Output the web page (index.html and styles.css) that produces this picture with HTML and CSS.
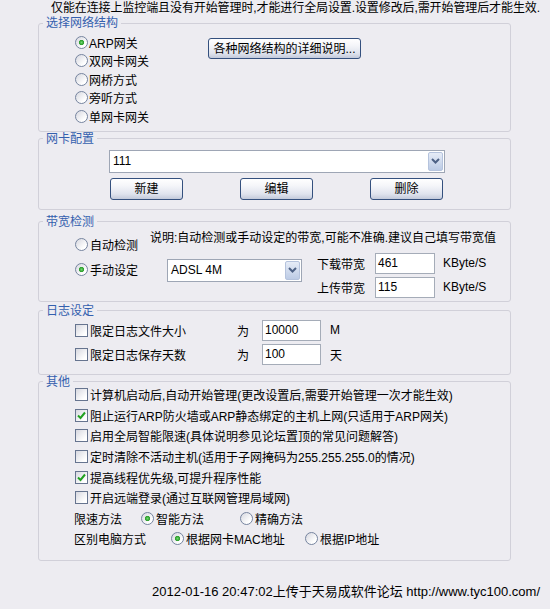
FILE: index.html
```html
<!DOCTYPE html>
<html lang="zh-CN">
<head>
<meta charset="utf-8">
<title>全局设置</title>
<link rel="stylesheet" href="styles.css">
</head>
<body>
<div class="notice">仅能在连接上监控端且没有开始管理时,才能进行全局设置.设置修改后,需开始管理后才能生效.</div>

<fieldset class="grp g1">
  <legend>选择网络结构</legend>
  <div class="g1-body">
    <div class="net-list">
      <div class="opt"><span class="radio on"></span><span>ARP网关</span></div>
      <div class="opt"><span class="radio"></span><span>双网卡网关</span></div>
      <div class="opt"><span class="radio"></span><span>网桥方式</span></div>
      <div class="opt"><span class="radio"></span><span>旁听方式</span></div>
      <div class="opt"><span class="radio"></span><span>单网卡网关</span></div>
    </div>
    <div class="btn btn-wide">各种网络结构的详细说明...</div>
  </div>
</fieldset>

<fieldset class="grp g2">
  <legend>网卡配置</legend>
  <div class="g2-body">
    <div class="combo combo-nic"><span class="combo-text">111</span><span class="combo-arrow"><svg width="9" height="6" viewBox="0 0 9 6"><polyline points="1,1 4.5,4.5 8,1" fill="none" stroke="#4d6185" stroke-width="2"/></svg></span></div>
    <div class="nic-btns">
      <div class="btn btn-small">新建</div>
      <div class="btn btn-small">编辑</div>
      <div class="btn btn-small">删除</div>
    </div>
  </div>
</fieldset>

<fieldset class="grp g3">
  <legend>带宽检测</legend>
  <div class="g3-body">
    <div class="bw-modes">
      <div class="opt opt-bw"><span class="radio"></span><span>自动检测</span></div>
      <div class="opt opt-bw"><span class="radio on"></span><span>手动设定</span></div>
    </div>
    <div class="bw-main">
      <div class="bw-note">说明:自动检测或手动设定的带宽,可能不准确.建议自己填写带宽值</div>
      <div class="bw-row">
        <div class="combo combo-bw"><span class="combo-text">ADSL 4M</span><span class="combo-arrow"><svg width="9" height="6" viewBox="0 0 9 6"><polyline points="1,1 4.5,4.5 8,1" fill="none" stroke="#4d6185" stroke-width="2"/></svg></span></div>
        <div class="bw-grid">
          <span class="bw-label">下载带宽</span><span class="field">461</span><span class="unit">KByte/S</span>
          <span class="bw-label">上传带宽</span><span class="field">115</span><span class="unit">KByte/S</span>
        </div>
      </div>
    </div>
  </div>
</fieldset>

<fieldset class="grp g4">
  <legend>日志设定</legend>
  <div class="g4-body">
    <div class="opt"><span class="chk"></span><span>限定日志文件大小</span></div>
    <span class="wei">为</span><span class="field">10000</span><span class="unit">M</span>
    <div class="opt"><span class="chk"></span><span>限定日志保存天数</span></div>
    <span class="wei">为</span><span class="field">100</span><span class="unit">天</span>
  </div>
</fieldset>

<fieldset class="grp g5">
  <legend>其他</legend>
  <div class="g5-body">
    <div class="row opt"><span class="chk"></span><span>计算机启动后,自动开始管理(更改设置后,需要开始管理一次才能生效)</span></div>
    <div class="row opt"><span class="chk on"><svg width="11" height="11" viewBox="0 0 11 11"><polyline points="2,5.5 4.5,8 9,2.5" fill="none" stroke="#21a121" stroke-width="2"/></svg></span><span>阻止运行ARP防火墙或ARP静态绑定的主机上网(只适用于ARP网关)</span></div>
    <div class="row opt"><span class="chk"></span><span>启用全局智能限速(具体说明参见论坛置顶的常见问题解答)</span></div>
    <div class="row opt"><span class="chk"></span><span>定时清除不活动主机(适用于子网掩码为255.255.255.0的情况)</span></div>
    <div class="row opt"><span class="chk on"><svg width="11" height="11" viewBox="0 0 11 11"><polyline points="2,5.5 4.5,8 9,2.5" fill="none" stroke="#21a121" stroke-width="2"/></svg></span><span>提高线程优先级,可提升程序性能</span></div>
    <div class="row opt"><span class="chk"></span><span>开启远端登录(通过互联网管理局域网)</span></div>
    <div class="row">
      <span class="row-label rl-speed">限速方法</span>
      <div class="opt opt-speed"><span class="radio on"></span><span>智能方法</span></div>
      <div class="opt"><span class="radio"></span><span>精确方法</span></div>
    </div>
    <div class="row">
      <span class="row-label rl-pc">区别电脑方式</span>
      <div class="opt opt-pc"><span class="radio on"></span><span>根据网卡MAC地址</span></div>
      <div class="opt"><span class="radio"></span><span>根据IP地址</span></div>
    </div>
  </div>
</fieldset>

<div class="footer">2012-01-16 20:47:02上传于天易成软件论坛 http://www.tyc100.com/</div>
</body>
</html>
```

FILE: styles.css
```css
* { box-sizing: border-box; }

html, body {
  margin: 0;
  padding: 0;
  background: #edecf1;
}

body {
  font-family: "Liberation Sans", "Noto Sans CJK SC", sans-serif;
  font-size: 12px;
  color: #000;
  width: 550px;
  height: 609px;
  overflow: hidden;
}

.notice {
  height: 16px;
  line-height: 16px;
  padding-left: 51px;
  white-space: nowrap;
  letter-spacing: -0.1px;
}

.grp {
  margin: 0 0 0 38px;
  width: 473px;
  padding: 0;
  border: 1px solid #d1d0d9;
  border-radius: 3px;
  min-width: 0;
}

.grp legend {
  margin-left: 4px;
  padding: 0 3px;
  line-height: 14px;
  height: 14px;
  color: #3460ae;
}

.opt {
  display: flex;
  align-items: center;
  white-space: nowrap;
}

.radio {
  flex: none;
  width: 13px;
  height: 13px;
  border-radius: 50%;
  border: 1px solid #76849f;
  background: linear-gradient(135deg, #d6d7df, #ffffff 75%);
  margin-right: 2px;
}

.radio.on {
  background:
    radial-gradient(circle at 50% 50%, #6fd86f 0, #2c9e2c 2.2px, rgba(44,158,44,0) 3px),
    linear-gradient(135deg, #d6d7df, #ffffff 75%);
}

.chk {
  flex: none;
  width: 13px;
  height: 13px;
  border: 1px solid #66748f;
  background: linear-gradient(135deg, #d7d8e0, #ffffff 80%);
  margin-right: 2px;
  display: flex;
  align-items: center;
  justify-content: center;
}

.chk svg { display: block; }

.btn {
  display: flex;
  align-items: center;
  justify-content: center;
  border: 1px solid #34507e;
  border-radius: 3px;
  background: linear-gradient(#ffffff 0%, #f4f5f9 35%, #dfe3ed 75%, #c3cadb 100%);
  white-space: nowrap;
  line-height: 14px;
}

.field {
  display: flex;
  align-items: center;
  height: 21px;
  background: #fff;
  border: 1px solid #a5acb8;
  padding-left: 2px;
}

.combo {
  display: flex;
  align-items: stretch;
  background: #fff;
  border: 1px solid #9ea6b5;
  padding: 1px;
}

.combo-text {
  flex: 1;
  display: flex;
  align-items: center;
  padding-left: 2px;
}

.combo-arrow {
  flex: none;
  width: 15px;
  display: flex;
  align-items: center;
  justify-content: center;
  border: 1px solid #b5c3dd;
  border-radius: 2px;
  background: linear-gradient(#e6ecf7, #bccbe5);
}

.combo-arrow svg { display: block; }

/* group 1 */
.g1-body {
  display: flex;
  padding: 3px 0 5px 36px;
}

.net-list {
  width: 133px;
}

.net-list .opt {
  height: 18.5px;
}

.net-list .radio { margin-right: 1px; }

.btn-wide {
  width: 153px;
  height: 21px;
  margin-top: 5px;
}

/* group 2 */
.g2-body {
  padding: 4px 0 9px 70px;
}

.combo-nic {
  width: 336px;
  height: 23px;
}

.nic-btns {
  display: flex;
  justify-content: space-between;
  width: 333px;
  margin-top: 5px;
  margin-left: 1px;
}

.btn-small {
  width: 73px;
  height: 22px;
}

/* group 3 */
.g3 { margin-top: 5px; }

.g3-body {
  display: flex;
  padding: 0 0 3px 36px;
}

.bw-modes {
  width: 75px;
  padding-top: 6px;
  display: flex;
  flex-direction: column;
  gap: 5px;
}

.opt-bw {
  height: 20px;
}

.bw-note {
  margin-top: 2px;
  line-height: 14px;
  white-space: nowrap;
}

.bw-row {
  display: flex;
  align-items: flex-start;
  margin-top: 8px;
}

.combo-bw {
  width: 135px;
  height: 23px;
  margin-left: 17px;
  margin-top: 6px;
}

.bw-grid {
  margin-left: 15px;
  display: grid;
  grid-template-columns: 58px 60px auto;
  grid-auto-rows: 21px;
  row-gap: 3px;
  align-items: center;
}

.bw-grid .field { height: 21px; }

.unit {
  padding-left: 8px;
  white-space: nowrap;
}

/* group 4 */
.g4 { margin-top: 2px; }

.g4-body {
  display: grid;
  grid-template-columns: 162px 25px 59px auto;
  grid-auto-rows: 21px;
  row-gap: 3px;
  align-items: center;
  padding: 2px 0 9px 36px;
}

.g4-body .unit { padding-left: 9px; }

/* group 5 */
.g5-body {
  margin-top: -4px;
  padding: 0 0 11px 35px;
}

.g5-body .row {
  height: 20.6px;
  display: flex;
  align-items: center;
}

.g5-body .chk { margin-left: 1px; }

.row-label { flex: none; }
.rl-speed { width: 67px; }
.rl-pc { width: 97px; }

.opt-speed { width: 99px; }
.opt-pc { width: 134px; }

.footer {
  margin-top: 24px;
  padding-left: 152px;
  line-height: 14px;
  font-size: 13px;
  white-space: nowrap;
}
```
